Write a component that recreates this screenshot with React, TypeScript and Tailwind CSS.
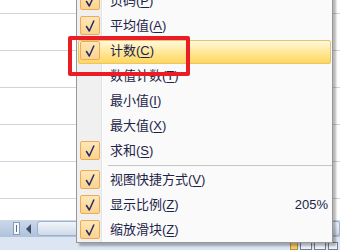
import * as React from 'react';

type Item = {
  label: string;
  key: string;
  checked: boolean;
  active?: boolean;
  value?: string;
};

const topItems: Item[] = [
  { label: '页码', key: 'P', checked: true },
  { label: '平均值', key: 'A', checked: true },
  { label: '计数', key: 'C', checked: true, active: true },
  { label: '数值计数', key: 'T', checked: false },
  { label: '最小值', key: 'I', checked: false },
  { label: '最大值', key: 'X', checked: false },
  { label: '求和', key: 'S', checked: true },
];

const bottomItems: Item[] = [
  { label: '视图快捷方式', key: 'V', checked: true },
  { label: '显示比例', key: 'Z', checked: true, value: '205%' },
  { label: '缩放滑块', key: 'Z', checked: true },
];

const CheckBox = () => (
  <div className="w-[20px] h-[19px] rounded-[2px] border border-[#efa95a] bg-gradient-to-b from-[#fee7b6] to-[#fbd38d] flex items-center justify-center">
    <svg width="14" height="14" viewBox="0 0 14 14">
      <path d="M3.5 7.5 L6.3 12 L10.8 2" fill="none" stroke="#232c6a" strokeWidth="1.5" strokeLinecap="round" strokeLinejoin="round" />
    </svg>
  </div>
);

const MenuRow = ({ item }: { item: Item }) => (
  <div className="relative h-[25px] flex items-center">
    {item.active && (
      <div className="absolute left-[1px] right-[1px] top-[2px] bottom-[-1px] rounded-[2px] border border-[#e6c56b] bg-gradient-to-b from-[#fff8dd] via-[#ffe899] to-[#ffd65c]" />
    )}
    <div className="relative w-[24px] flex justify-end pr-[1px]">{item.checked && <CheckBox />}</div>
    <div className="relative flex-1 flex items-center pl-[9px] pr-[4px] text-[13px] text-[#1c2448]">
      <span>
        {item.label}(<span className="underline underline-offset-2">{item.key}</span>)
      </span>
      {item.value && <span className="ml-auto">{item.value}</span>}
    </div>
  </div>
);

export default function App() {
  return (
    <div
      className="relative w-[340px] h-[250px] overflow-hidden bg-white"
      style={{ fontFamily: '"Liberation Sans", "Noto Sans CJK SC", sans-serif' }}
    >
      {/* sheet grid */}
      <div className="flex flex-col">
        <div className="h-[14px] border-b border-[#cfd4dc]" />
        {[0, 1, 2, 3, 4].map((i) => (
          <div key={i} className="h-[37px] border-b border-[#cfd4dc]" />
        ))}
        <div className="h-[21px]" />
        {/* horizontal scroll bar */}
        <div className="h-[17px] flex items-stretch bg-gradient-to-b from-[#cbd8ea] to-[#afc2dc]">
          <div className="w-[13px]" />
          <div className="w-[7px] my-[2px] bg-[#f4f7fb] border border-[#8a9bb5] flex justify-center">
            <div className="w-px bg-[#5d6f8c] my-[2px]" />
          </div>
          <div className="w-[17px] flex items-center justify-center">
            <div className="w-0 h-0 border-y-[5px] border-y-transparent border-r-[5px] border-r-[#3e4c66]" />
          </div>
          <div className="flex-1 my-[1px] rounded-[3px] border border-[#9fb1cb] bg-gradient-to-b from-[#f2f5fa] to-[#cfd9e8]" />
        </div>
        {/* status bar */}
        <div className="h-[13px] bg-[#dce6f3] flex justify-end items-end pr-[2px] gap-[2px]">
          <div className="w-[8px] h-[8px] bg-[#f6c96a] border border-[#b88f3a]" />
          <div className="w-[12px] h-[8px] border border-[#6f7f98] bg-[#eef2f8]" />
          <div className="w-[12px] h-[8px] border border-[#6f7f98] bg-[#eef2f8]" />
          <div className="w-[10px] h-[8px] border border-[#6f7f98] bg-[#eef2f8]" />
        </div>
      </div>

      {/* context menu */}
      <div className="absolute left-[76px] top-[-13px] w-[257px] border border-[#979797] bg-[#fafafa] shadow-[3px_3px_2px_rgba(0,0,0,0.28)]">
        <div className="absolute left-0 top-0 bottom-0 w-[25px] bg-[#f0f0f0] border-r border-[#e2e3e3]" />
        <div className="absolute left-[25px] top-0 bottom-0 w-px bg-white" />
        <div className="relative">
          {topItems.map((item) => (
            <MenuRow key={item.label} item={item} />
          ))}
          <div className="h-[4px] flex items-center pl-[31px]">
            <div className="flex-1 h-px bg-[#c5c5c5]" />
          </div>
          {bottomItems.map((item) => (
            <MenuRow key={item.label} item={item} />
          ))}
        </div>
      </div>

      {/* annotation box */}
      <div className="absolute left-[68px] top-[36px] w-[122px] h-[40px] border-[4px] border-[#ea1c24] rounded-[2px]" />
    </div>
  );
}
